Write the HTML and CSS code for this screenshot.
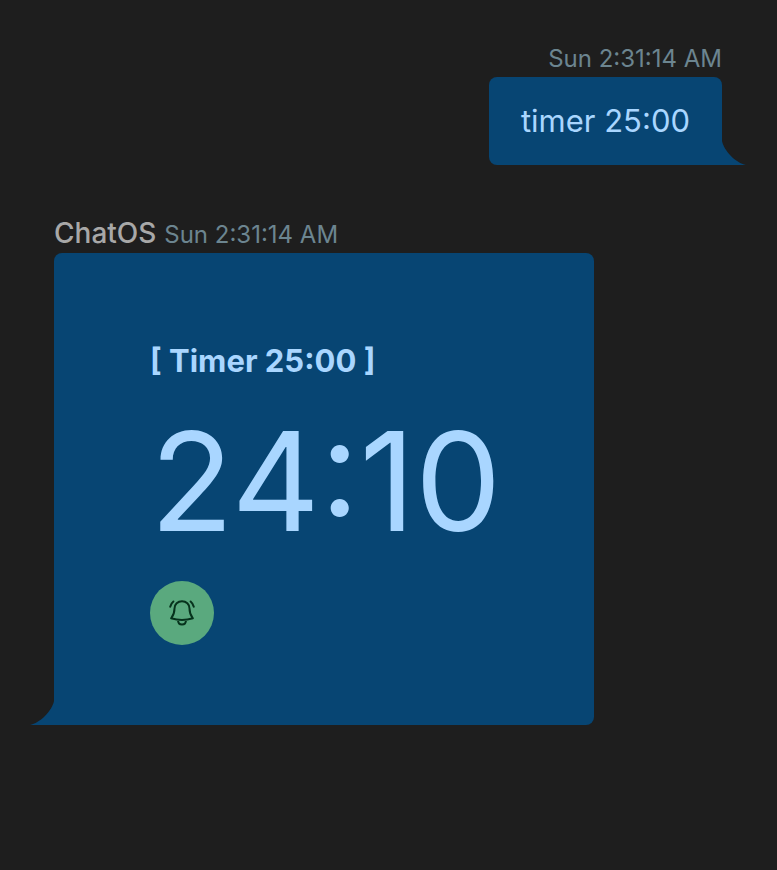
FILE: index.html
```html
<!DOCTYPE html>
<html lang="en">
<head>
<meta charset="utf-8">
<title>ChatOS</title>
<link rel="stylesheet" href="styles.css">
</head>
<body>
<main class="chat">
  <article class="message message-own">
    <header class="meta"><time class="time">Sun 2:31:14 AM</time></header>
    <div class="bubble">
      <p class="text">timer 25:00</p>
      <svg class="tail" viewBox="0 0 24 24" aria-hidden="true"><path d="M0 0C2 10 14 22 24 24H0z"/></svg>
    </div>
  </article>
  <article class="message message-bot">
    <header class="meta"><span class="author">ChatOS</span> <time class="time">Sun 2:31:14 AM</time></header>
    <div class="bubble bubble-timer">
      <h2 class="title">[ Timer 25:00 ]</h2>
      <div class="clock" role="timer">24:10</div>
      <button class="bell" type="button" aria-label="Toggle alarm">
        <svg class="bell-icon" viewBox="0 0 32 32" aria-hidden="true"><path d="M8.500 11.500C8.500 7.300 11.800 4.300 16 4.300s7.500 3 7.500 7.200c0 5.500 1.200 6.800 3.400 9.800-6.400 2-15.400 2-21.800 0 2.200-3 3.400-4.300 3.400-9.800zM12 23c0 2.800 1.700 4.600 4 4.600s4-1.800 4-4.600M7.400 4.500C5.800 5.800 4.700 7.500 4.200 9.800M24.600 4.500c1.600 1.300 2.700 3 3.200 5.300"/></svg>
      </button>
      <svg class="tail" viewBox="0 0 24 24" aria-hidden="true"><path d="M24 0C22 10 10 22 0 24H24z"/></svg>
    </div>
  </article>
</main>
</body>
</html>
```
FILE: styles.css
```css
* {
  box-sizing: border-box;
}

body {
  margin: 0;
  background: #1e1e1e;
  color: #a9d6ff;
  font-family: Inter, "Liberation Sans", sans-serif;
}

.chat {
  display: flex;
  flex-direction: column;
  gap: 48px;
  padding: 37px 55px 48px 54px;
}

.message {
  display: flex;
  flex-direction: column;
}

.message-own {
  align-items: flex-end;
}

.message-bot {
  align-items: flex-start;
}

.meta {
  height: 40px;
  font-size: 28px;
  line-height: 40px;
}

.author {
  color: #a8a8a8;
  font-weight: 550;
}

.time {
  color: #6c8590;
  font-size: 24px;
}

.bubble {
  position: relative;
  padding: 24px 32px;
  border-radius: 8px;
  background: #074573;
}

.message-own .bubble {
  border-bottom-right-radius: 0;
}

.message-bot .bubble {
  border-bottom-left-radius: 0;
}

.bubble-timer {
  padding: 80px 92px 80px 96px;
}

.text,
.title {
  margin: 0;
  font-size: 31px;
  line-height: 40px;
}

.text {
  font-weight: 400;
}

.title {
  margin-top: 8px;
  font-weight: 700;
}

.clock {
  font-size: 137px;
  line-height: 168px;
  margin: 16px 0;
}

.bell {
  display: flex;
  align-items: center;
  justify-content: center;
  width: 64px;
  height: 64px;
  padding: 0;
  border: 0;
  border-radius: 50%;
  background: #5aa97e;
}

.bell-icon {
  width: 32px;
  height: 32px;
  fill: none;
  stroke: #06321c;
  stroke-width: 2;
  stroke-linecap: round;
  stroke-linejoin: round;
}

.tail {
  position: absolute;
  bottom: 0;
  width: 24px;
  height: 24px;
  fill: #074573;
}

.message-own .tail {
  left: 100%;
}

.message-bot .tail {
  right: 100%;
}
```
